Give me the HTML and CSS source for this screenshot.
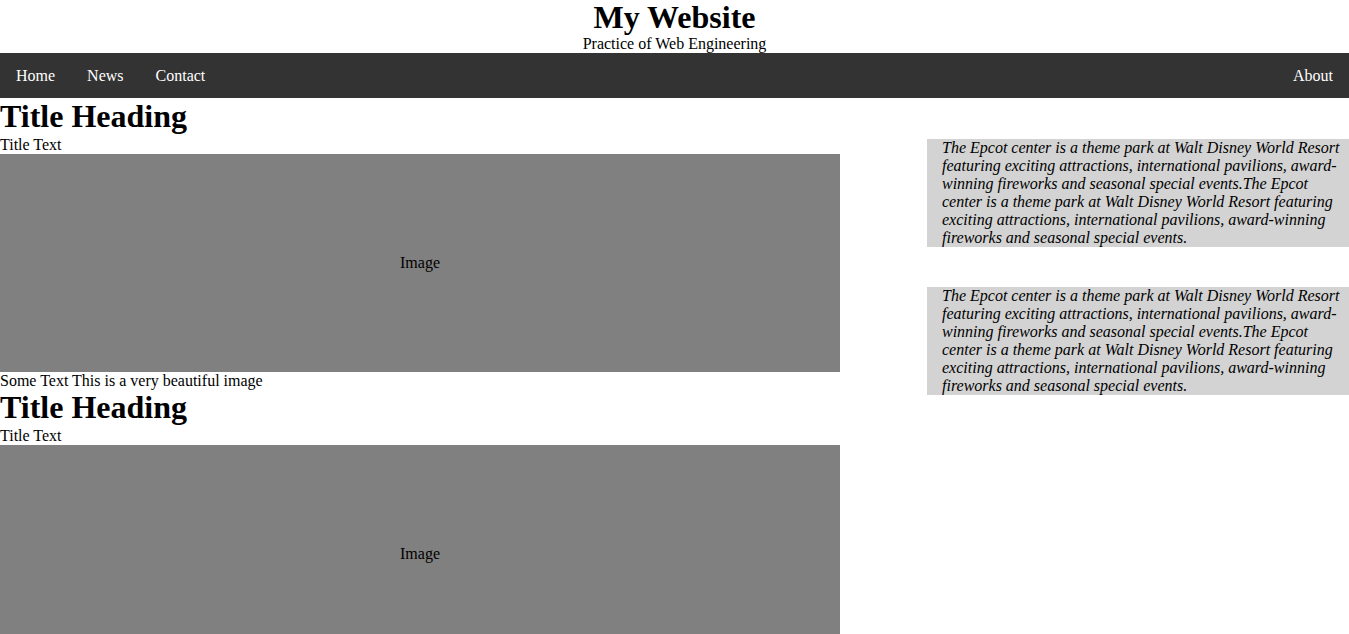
FILE: index.html
```html
<!DOCTYPE html>
<html>
<head>
<meta charset="utf-8">
<title>My Website</title>
<link rel="stylesheet" href="styles.css">
</head>
<body>
<header class="site-header">
  <h1 class="site-title">My Website</h1>
  <p class="site-sub">Practice of Web Engineering</p>
</header>
<nav class="topnav">
  <a href="#" class="nav-link">Home</a>
  <a href="#" class="nav-link">News</a>
  <a href="#" class="nav-link">Contact</a>
  <a href="#" class="nav-link nav-right">About</a>
</nav>
<div class="layout">
  <main class="main-col">
    <section class="post">
      <h2 class="post-title">Title Heading</h2>
      <div class="post-sub">Title Text</div>
      <div class="fake-img">Image</div>
      <p class="post-text">Some Text This is a very beautiful image</p>
    </section>
    <section class="post">
      <h2 class="post-title">Title Heading</h2>
      <div class="post-sub">Title Text</div>
      <div class="fake-img">Image</div>
      <p class="post-text">Some Text This is a very beautiful image</p>
    </section>
  </main>
  <aside class="side-col">
    <p class="side-box">The Epcot center is a theme park at Walt Disney World Resort featuring exciting attractions, international pavilions, award-winning fireworks and seasonal special events.The Epcot center is a theme park at Walt Disney World Resort featuring exciting attractions, international pavilions, award-winning fireworks and seasonal special events.</p>
    <p class="side-box">The Epcot center is a theme park at Walt Disney World Resort featuring exciting attractions, international pavilions, award-winning fireworks and seasonal special events.The Epcot center is a theme park at Walt Disney World Resort featuring exciting attractions, international pavilions, award-winning fireworks and seasonal special events.</p>
  </aside>
</div>
</body>
</html>
```

FILE: styles.css
```css
html, body {
  margin: 0;
  padding: 0;
}
body {
  font-family: "Liberation Serif", "Times New Roman", serif;
  font-size: 16px;
  color: #000;
  background: #fff;
}
.site-header {
  text-align: center;
}
.site-title {
  margin: 0;
  font-size: 32px;
  line-height: 34px;
  font-weight: bold;
}
.site-sub {
  margin: 0;
  line-height: 19px;
}
.topnav {
  display: flex;
  background: #333333;
  height: 45px;
  align-items: center;
}
.nav-link {
  color: #fff;
  text-decoration: none;
  padding: 0 16px;
  font-size: 16px;
}
.nav-right {
  margin-left: auto;
}
.layout {
  display: flex;
  align-items: flex-start;
}
.main-col {
  width: 840px;
  flex: none;
}
.post-title {
  margin: 0;
  font-size: 32px;
  line-height: 37px;
  font-weight: bold;
}
.post-sub {
  line-height: 19px;
}
.fake-img {
  background: #808080;
  height: 218px;
  display: flex;
  align-items: center;
  justify-content: center;
}
.post-text {
  margin: 0;
  line-height: 17px;
}
.side-col {
  width: 422px;
  margin-left: auto;
  display: flex;
  flex-direction: column;
  gap: 40px;
  padding-top: 41px;
}
.side-box {
  margin: 0;
  background: #d3d3d3;
  font-style: italic;
  line-height: 18px;
  padding: 0 8px 0 15px;
}
```
